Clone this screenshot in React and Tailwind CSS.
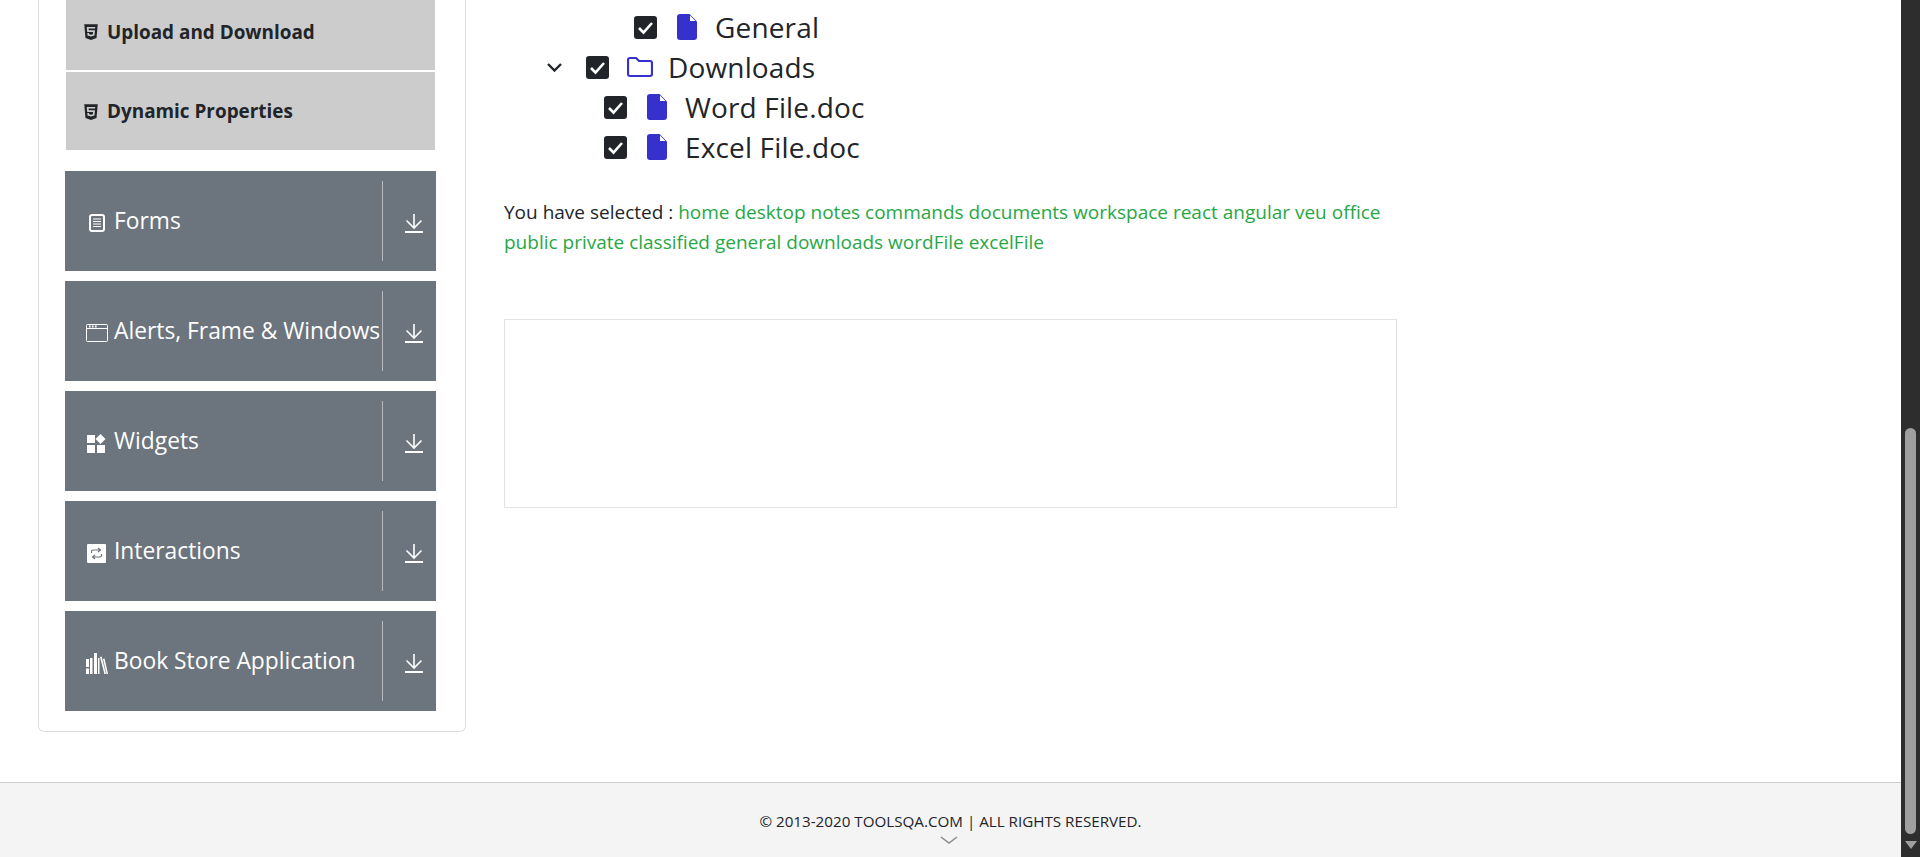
import React from 'react';
import { FaHtml5 } from 'react-icons/fa';

function DownArrow() {
  return (
    <svg width="18" height="19" viewBox="0 0 18 19" fill="none" stroke="white" strokeWidth="1.6">
      <path d="M9 0v14M1.5 6.5L9 14l7.5-7.5" />
      <path d="M0 18h18" strokeWidth="2" />
    </svg>
  );
}

function FormsIcon() {
  return (
    <svg width="16" height="18" viewBox="0 0 16 18" fill="none" stroke="white">
      <rect x="1" y="1" width="14" height="16" rx="2" strokeWidth="2" />
      <path d="M4 5h8M4 7.5h8M4 10h8M4 12.5h8" strokeWidth="1" />
    </svg>
  );
}

function WindowIcon() {
  return (
    <svg width="22" height="18" viewBox="0 0 22 18" fill="none" stroke="white">
      <rect x="0.5" y="0.5" width="21" height="17" rx="1" />
      <path d="M0.5 4.5h21" />
      <path d="M3 2.5h1.6M6 2.5h1.6M9 2.5h1.6" strokeWidth="2" />
    </svg>
  );
}

function WidgetsIcon() {
  return (
    <svg width="19" height="19" viewBox="0 0 19 19" fill="white">
      <rect x="0" y="1" width="8" height="8" />
      <rect x="0" y="11" width="8" height="8" />
      <rect x="10" y="11" width="8" height="8" />
      <path d="M13.5 0l5 5-5 5-5-5z" />
    </svg>
  );
}

function InteractionsIcon() {
  return (
    <svg width="19" height="19" viewBox="0 0 19 19">
      <rect width="19" height="19" rx="1" fill="white" />
      <path d="M4.5 9V7.5C4.5 6.5 5.2 6 6 6h7M11 4l2.5 2L11 8M14.5 10v1.5c0 1-.7 1.5-1.5 1.5H6M8 11l-2.5 2L8 15" fill="none" stroke="#6c757d" strokeWidth="1.2" />
    </svg>
  );
}

function BooksIcon() {
  return (
    <svg width="22" height="21" viewBox="0 0 22 21" fill="white">
      <path d="M0 6h3v8H0zM0 15.5h3V21H0zM4 5h2.5v16H4zM8 0h3v21H8z" />
      <path d="M12 5h1.5v16H12zM14 4l1.6-.5L20 21h-1.6zM17 6l1.5-.5L22 21h-1.5z" />
    </svg>
  );
}

function FileIcon() {
  return (
    <svg width="20" height="26" viewBox="0 0 20 26" className="shrink-0">
      <path d="M3 0h9.5L20 7.5V23a3 3 0 0 1-3 3H3a3 3 0 0 1-3-3V3a3 3 0 0 1 3-3z" fill="#3631cc" />
      <path d="M13 1.5L18.5 7H13z" fill="white" />
    </svg>
  );
}

function FolderIcon() {
  return (
    <svg width="26" height="22" viewBox="0 0 26 22" fill="none" stroke="#3631cc" strokeWidth="2.2" className="shrink-0">
      <path d="M1 4a2 2 0 0 1 2-2h6l3 3h11a2 2 0 0 1 2 2v11a2 2 0 0 1-2 2H3a2 2 0 0 1-2-2z" />
    </svg>
  );
}

function CheckBox() {
  return (
    <svg width="23" height="23" viewBox="0 0 23 23" className="shrink-0">
      <rect width="23" height="23" rx="3" fill="#212529" />
      <path d="M5 12l4.5 4.5L18 7" fill="none" stroke="white" strokeWidth="2.6" />
    </svg>
  );
}

function TreeRow({ indent, label, folder, open }) {
  return (
    <div className={`flex h-10 items-center ${indent}`}>
      {open && (
        <svg width="15" height="9" viewBox="0 0 15 9" fill="none" stroke="#212529" strokeWidth="2.4" className="mr-[24px] shrink-0">
          <path d="M1 1l6.5 6.5L14 1" />
        </svg>
      )}
      <CheckBox />
      <span className={folder ? 'ml-[18px]' : 'ml-[20px]'}>{folder ? <FolderIcon /> : <FileIcon />}</span>
      <span className={`text-[28px] leading-10 tracking-[0.15px] text-[#212529] ${folder ? 'ml-[15px]' : 'ml-[18px]'}`}>{label}</span>
    </div>
  );
}

function GroupHeader({ icon, label }) {
  return (
    <div className="flex h-[100px] items-center bg-[#6c757d] pr-[13px] text-white">
      <div className="flex w-[49px] shrink-0 justify-center pl-[14px] pt-[4px]">{icon}</div>
      <span className="w-[268px] shrink-0 whitespace-nowrap text-[22.8px] leading-none">{label}</span>
      <div className="flex h-[80px] flex-1 items-center justify-end border-l border-white/50 pt-[5px]">
        <DownArrow />
      </div>
    </div>
  );
}

export default function App() {
  const selected = 'home desktop notes commands documents workspace react angular veu office public private classified general downloads wordFile excelFile';

  return (
    <div className="flex h-screen w-full overflow-hidden bg-white font-['Open_Sans',sans-serif]">
      <div className="flex min-w-0 flex-1 flex-col">
        <div className="flex h-[782px] shrink-0">
          <div className="ml-[38px] h-[732px] w-[428px] shrink-0 rounded-b-[6px] border-x border-b border-[#dfdfdf] pl-[26px] pr-[29px]">
            <div className="flex flex-col gap-[2px] px-px text-[18.9px] font-bold text-[#212529]">
              <div className="flex h-[70px] items-center gap-[7px] bg-[#cccccc] pl-[16px] pb-[6px]">
                <FaHtml5 className="text-[18px]" />
                <span>Upload and Download</span>
              </div>
              <div className="flex h-[78px] items-center gap-[7px] bg-[#cccccc] pl-[16px] pt-[1px]">
                <FaHtml5 className="text-[18px]" />
                <span>Dynamic Properties</span>
              </div>
            </div>
            <div className="mt-[21px] flex flex-col gap-[10px]">
              <GroupHeader icon={<FormsIcon />} label="Forms" />
              <GroupHeader icon={<WindowIcon />} label="Alerts, Frame & Windows" />
              <GroupHeader icon={<WidgetsIcon />} label="Widgets" />
              <GroupHeader icon={<InteractionsIcon />} label="Interactions" />
              <GroupHeader icon={<BooksIcon />} label="Book Store Application" />
            </div>
          </div>
          <div className="ml-[38px] w-[893px] shrink-0 pt-[7px]">
            <TreeRow indent="pl-[130px]" label="General" />
            <TreeRow indent="pl-[43px]" label="Downloads" folder open />
            <TreeRow indent="pl-[100px]" label="Word File.doc" />
            <TreeRow indent="pl-[100px]" label="Excel File.doc" />
            <p className="mt-[30px] w-[885px] text-[19px] leading-[30px] text-[#212529]">
              You have selected : <span className="text-[#28a745]">{selected}</span>
            </p>
            <div className="mt-[62px] h-[189px] border border-[#e2e2e2]" />
          </div>
        </div>
        <div className="flex flex-1 flex-col items-center border-t border-[#cccccc] bg-[#f4f4f4] pt-[28px]">
          <p className="text-[15.2px] leading-5 text-[#212529]">© 2013-2020 TOOLSQA.COM | ALL RIGHTS RESERVED.</p>
          <svg width="18" height="8" viewBox="0 0 18 8" fill="none" stroke="#8a8a8a" strokeWidth="1.5" className="mt-[4px] -translate-x-[2px] translate-y-px">
            <path d="M1 1l8 6 8-6" />
          </svg>
        </div>
      </div>
      <div className="flex w-[19px] shrink-0 flex-col items-center justify-end bg-[#2d2d2d] pb-[8px]">
        <div className="h-[406px] w-[11px] rounded-full bg-[#9f9f9f]" />
        <div className="mt-[7px] h-0 w-0 border-x-[6.5px] border-t-[8px] border-x-transparent border-t-[#9f9f9f]" />
      </div>
    </div>
  );
}
